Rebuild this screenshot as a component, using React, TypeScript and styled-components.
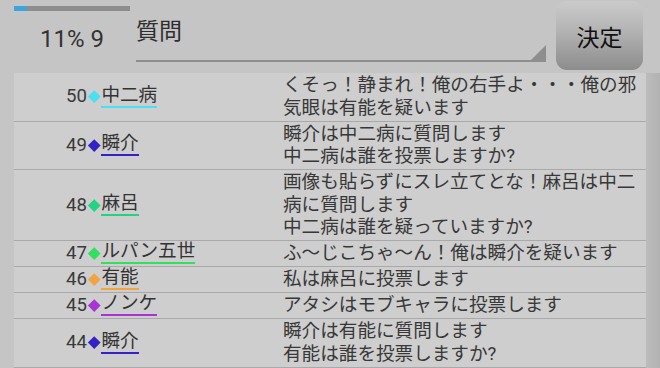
import React from 'react';
import styled, { createGlobalStyle } from 'styled-components';

type Post = {
  no: number;
  name: string;
  color: string;
  text: string;
};

const posts: Post[] = [
  { no: 50, name: '中二病', color: '#48e0f2', text: 'くそっ！静まれ！俺の右手よ・・・俺の邪気眼は有能を疑います' },
  { no: 49, name: '瞬介', color: '#3422c4', text: '瞬介は中二病に質問します\n中二病は誰を投票しますか?' },
  { no: 48, name: '麻呂', color: '#22d482', text: '画像も貼らずにスレ立てとな！麻呂は中二病に質問します\n中二病は誰を疑っていますか?' },
  { no: 47, name: 'ルパン五世', color: '#30e05e', text: 'ふ～じこちゃ～ん！俺は瞬介を疑います' },
  { no: 46, name: '有能', color: '#f2a440', text: '私は麻呂に投票します' },
  { no: 45, name: 'ノンケ', color: '#a834d4', text: 'アタシはモブキャラに投票します' },
  { no: 44, name: '瞬介', color: '#3422c4', text: '瞬介は有能に質問します\n有能は誰を投票しますか?' },
];

const App = () => {
  const progress = 11;

  return (
    <>
      <GlobalStyle />
      <Screen>
        <Header>
          <Status>
            <Progress>
              <ProgressFill style={{ width: `${progress}%` }} />
            </Progress>
            <StatusText>11% 9</StatusText>
          </Status>
          <Field>
            <FieldLabel>質問</FieldLabel>
            <FieldCorner />
          </Field>
          <DecideButton type='button'>決定</DecideButton>
        </Header>
        <ListArea>
          <List>
            {posts.map((p) => (
              <Row key={p.no}>
                <Who>
                  <No>{p.no}</No>
                  <Diamond $color={p.color} />
                  <Name $color={p.color}>{p.name}</Name>
                </Who>
                <Message>{p.text}</Message>
              </Row>
            ))}
          </List>
          <Gutter />
        </ListArea>
      </Screen>
    </>
  );
};

export default App;

const GlobalStyle = createGlobalStyle`
  html, body {
    margin: 0;
    padding: 0;
    background: #c5c5c5;
  }
  body {
    font-family: Roboto, "Noto Sans CJK JP", sans-serif;
    color: #363636;
  }
`;

const Screen = styled.div`
  width: 660px;
  height: 368px;
  overflow: hidden;
  background: #c5c5c5;
`;

const Header = styled.div`
  display: flex;
  height: 73px;
  padding-left: 14px;
`;

const Status = styled.div`
  width: 116px;
  display: flex;
  flex-direction: column;
  align-items: center;
  padding-top: 6px;
`;

const Progress = styled.div`
  width: 100%;
  height: 5px;
  background: #8d8d8d;
`;

const ProgressFill = styled.div`
  height: 100%;
  background: #3aa6dc;
`;

const StatusText = styled.div`
  margin-top: 13px;
  font-size: 24px;
  line-height: 30px;
  color: #333;
`;

const Field = styled.div`
  position: relative;
  width: 410px;
  height: 60px;
  margin-left: 6px;
  border-bottom: 2px solid #8e8e8e;
`;

const FieldLabel = styled.div`
  padding-top: 15px;
  font-size: 23px;
  line-height: 34px;
  color: #2e2e2e;
`;

const FieldCorner = styled.div`
  position: absolute;
  right: 0;
  bottom: 0;
  width: 0;
  height: 0;
  border-left: 15px solid transparent;
  border-bottom: 15px solid #8e8e8e;
`;

const DecideButton = styled.button`
  width: 87px;
  height: 69px;
  margin: 1px 0 0 10px;
  border: none;
  border-radius: 11px;
  background: linear-gradient(to bottom, #cbcbcb 0%, #b2b2b2 45%, #8c8c8c 100%);
  font-family: Roboto, "Noto Sans CJK JP", sans-serif;
  font-size: 23px;
  color: #111;
  padding: 0;
`;

const ListArea = styled.div`
  display: flex;
  padding-left: 14px;
`;

const List = styled.div`
  flex: 1;
  background: #cecece;
`;

const Gutter = styled.div`
  width: 14px;
  background: linear-gradient(to right, #bcbcbc, #b2b2b2);
`;

const Row = styled.div`
  display: flex;
  align-items: center;
  padding: 1px 0 1.5px;
  border-bottom: 1px solid #a9a9a9;
  font-size: 18.6px;
  line-height: 22.5px;
`;

const Who = styled.div`
  width: 269px;
  flex-shrink: 0;
  display: flex;
  align-items: center;
  padding-left: 52px;
  box-sizing: border-box;
`;

const No = styled.span`
  color: #3a3a3a;
`;

const Diamond = styled.span<{ $color: string }>`
  width: 8.5px;
  height: 8.5px;
  margin: 0 3px;
  background: ${(p) => p.$color};
  transform: rotate(45deg);
`;

const Name = styled.span<{ $color: string }>`
  display: inline-block;
  line-height: 18px;
  padding-bottom: 2px;
  border-bottom: 2px solid ${(p) => p.$color};
  color: #333;
`;

const Message = styled.div`
  width: 360px;
  white-space: pre-line;
  color: #383838;
`;
